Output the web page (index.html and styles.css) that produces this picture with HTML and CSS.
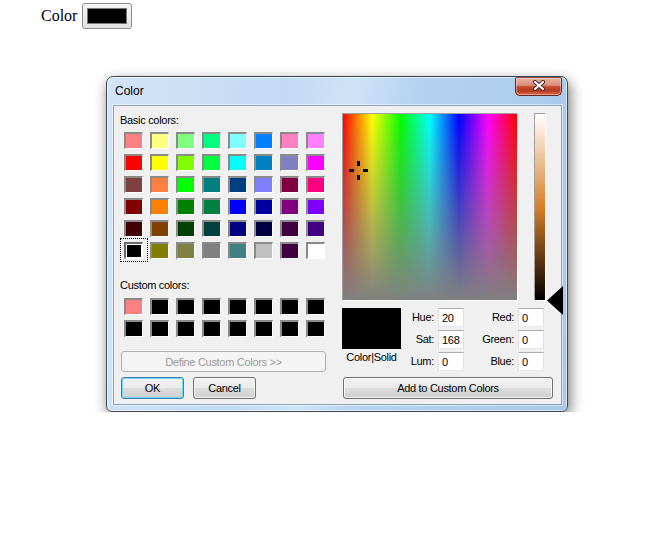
FILE: index.html
```html
<!DOCTYPE html>
<html lang="en">
<head>
    <meta charset="UTF-8">
    <title>Color</title>
    <link rel="stylesheet" href="styles.css">
</head>
<body>
    <div class="picker-row">
        <span>Color</span>
        <button class="color-btn"><span class="color-btn-swatch"></span></button>
    </div>

    <!-- Windows color dialog -->
    <div class="dialog">
        <div class="titlebar">
            <span class="title">Color</span>
            <div class="close-btn">
                <svg width="14" height="11" viewBox="0 0 14 11">
                    <path d="M3 2 L11 9 M11 2 L3 9" stroke="#4a2a24" stroke-width="4.2" stroke-linecap="round"/>
                    <path d="M3 2 L11 9 M11 2 L3 9" stroke="#fff" stroke-width="2.2" stroke-linecap="round"/>
                </svg>
            </div>
        </div>

        <div class="client">
            <div class="left-col">
                <div class="label">Basic colors:</div>
                <div class="swatch-grid">
                    <div class="cell"><div class="swatch" style="background:#ff8080"></div></div>
                    <div class="cell"><div class="swatch" style="background:#ffff80"></div></div>
                    <div class="cell"><div class="swatch" style="background:#80ff80"></div></div>
                    <div class="cell"><div class="swatch" style="background:#00ff80"></div></div>
                    <div class="cell"><div class="swatch" style="background:#80ffff"></div></div>
                    <div class="cell"><div class="swatch" style="background:#0080ff"></div></div>
                    <div class="cell"><div class="swatch" style="background:#ff80c0"></div></div>
                    <div class="cell"><div class="swatch" style="background:#ff80ff"></div></div>

                    <div class="cell"><div class="swatch" style="background:#ff0000"></div></div>
                    <div class="cell"><div class="swatch" style="background:#ffff00"></div></div>
                    <div class="cell"><div class="swatch" style="background:#80ff00"></div></div>
                    <div class="cell"><div class="swatch" style="background:#00ff40"></div></div>
                    <div class="cell"><div class="swatch" style="background:#00ffff"></div></div>
                    <div class="cell"><div class="swatch" style="background:#0080c0"></div></div>
                    <div class="cell"><div class="swatch" style="background:#8080c0"></div></div>
                    <div class="cell"><div class="swatch" style="background:#ff00ff"></div></div>

                    <div class="cell"><div class="swatch" style="background:#804040"></div></div>
                    <div class="cell"><div class="swatch" style="background:#ff8040"></div></div>
                    <div class="cell"><div class="swatch" style="background:#00ff00"></div></div>
                    <div class="cell"><div class="swatch" style="background:#008080"></div></div>
                    <div class="cell"><div class="swatch" style="background:#004080"></div></div>
                    <div class="cell"><div class="swatch" style="background:#8080ff"></div></div>
                    <div class="cell"><div class="swatch" style="background:#800040"></div></div>
                    <div class="cell"><div class="swatch" style="background:#ff0080"></div></div>

                    <div class="cell"><div class="swatch" style="background:#800000"></div></div>
                    <div class="cell"><div class="swatch" style="background:#ff8000"></div></div>
                    <div class="cell"><div class="swatch" style="background:#008000"></div></div>
                    <div class="cell"><div class="swatch" style="background:#008040"></div></div>
                    <div class="cell"><div class="swatch" style="background:#0000ff"></div></div>
                    <div class="cell"><div class="swatch" style="background:#0000a0"></div></div>
                    <div class="cell"><div class="swatch" style="background:#800080"></div></div>
                    <div class="cell"><div class="swatch" style="background:#8000ff"></div></div>

                    <div class="cell"><div class="swatch" style="background:#400000"></div></div>
                    <div class="cell"><div class="swatch" style="background:#804000"></div></div>
                    <div class="cell"><div class="swatch" style="background:#004000"></div></div>
                    <div class="cell"><div class="swatch" style="background:#004040"></div></div>
                    <div class="cell"><div class="swatch" style="background:#000080"></div></div>
                    <div class="cell"><div class="swatch" style="background:#000040"></div></div>
                    <div class="cell"><div class="swatch" style="background:#400040"></div></div>
                    <div class="cell"><div class="swatch" style="background:#400080"></div></div>

                    <div class="cell focused"><div class="swatch selected" style="background:#000000"></div></div>
                    <div class="cell"><div class="swatch" style="background:#808000"></div></div>
                    <div class="cell"><div class="swatch" style="background:#808040"></div></div>
                    <div class="cell"><div class="swatch" style="background:#808080"></div></div>
                    <div class="cell"><div class="swatch" style="background:#408080"></div></div>
                    <div class="cell"><div class="swatch" style="background:#c0c0c0"></div></div>
                    <div class="cell"><div class="swatch" style="background:#400040"></div></div>
                    <div class="cell"><div class="swatch" style="background:#ffffff"></div></div>
                </div>

                <div class="label custom-label">Custom colors:</div>
                <div class="swatch-grid custom-grid">
                    <div class="cell"><div class="swatch" style="background:#ff8080"></div></div>
                    <div class="cell"><div class="swatch"></div></div>
                    <div class="cell"><div class="swatch"></div></div>
                    <div class="cell"><div class="swatch"></div></div>
                    <div class="cell"><div class="swatch"></div></div>
                    <div class="cell"><div class="swatch"></div></div>
                    <div class="cell"><div class="swatch"></div></div>
                    <div class="cell"><div class="swatch"></div></div>
                    <div class="cell"><div class="swatch"></div></div>
                    <div class="cell"><div class="swatch"></div></div>
                    <div class="cell"><div class="swatch"></div></div>
                    <div class="cell"><div class="swatch"></div></div>
                    <div class="cell"><div class="swatch"></div></div>
                    <div class="cell"><div class="swatch"></div></div>
                    <div class="cell"><div class="swatch"></div></div>
                    <div class="cell"><div class="swatch"></div></div>
                </div>

                <button class="btn btn-define" disabled>Define Custom Colors &gt;&gt;</button>
                <div class="btn-row">
                    <button class="btn btn-default">OK</button>
                    <button class="btn">Cancel</button>
                </div>
            </div>

            <div class="right-col">
                <div class="spectrum-row">
                    <div class="spectrum">
                        <svg class="crosshair" width="19" height="19" viewBox="0 0 19 19">
                            <rect x="8" y="0" width="3" height="5"/>
                            <rect x="8" y="14" width="3" height="5"/>
                            <rect x="0" y="8" width="5" height="3"/>
                            <rect x="14" y="8" width="5" height="3"/>
                        </svg>
                    </div>
                    <div class="lum-wrap">
                        <div class="lum-bar"></div>
                        <svg class="lum-arrow" width="16" height="29" viewBox="0 0 16 29">
                            <polygon points="0,14.5 16,0 16,29"/>
                        </svg>
                    </div>
                </div>

                <div class="sample-row">
                    <div class="sample">
                        <div class="sample-box"></div>
                        <div class="sample-label">Color|Solid</div>
                    </div>
                    <div class="fields">
                        <label>Hue:</label><input type="text" value="20">
                        <label>Red:</label><input type="text" value="0">
                        <label>Sat:</label><input type="text" value="168">
                        <label>Green:</label><input type="text" value="0">
                        <label>Lum:</label><input type="text" value="0">
                        <label>Blue:</label><input type="text" value="0">
                    </div>
                </div>

                <button class="btn btn-add">Add to Custom Colors</button>
            </div>
        </div>
    </div>
</body>
</html>
```

FILE: styles.css
```css
* {
    box-sizing: border-box;
}

body {
    margin: 0;
    background: #fff;
    font-family: "Liberation Serif", "Times New Roman", serif;
}

.picker-row {
    display: flex;
    align-items: center;
    gap: 5px;
    padding: 3px 0 0 41px;
    font-size: 16px;
}

.color-btn {
    width: 50px;
    height: 26px;
    padding: 0;
    border: 1px solid #8e8f8f;
    border-radius: 3px;
    background: linear-gradient(#f6f6f6, #e2e2e2);
    display: flex;
    align-items: center;
    justify-content: center;
}

.color-btn-swatch {
    width: 40px;
    height: 16px;
    background: #000;
    border: 1px solid #777;
}

/* dialog frame */
.dialog {
    width: 462px;
    height: 336px;
    margin: 47px 0 0 106px;
    padding: 0 5px 6px 6px;
    display: flex;
    flex-direction: column;
    border: 1px solid #3b4756;
    border-radius: 7px 7px 6px 6px;
    background: linear-gradient(100deg, #d3e4f7 0%, #c3daf3 35%, #cfe3f7 48%, #b6d2f0 60%, #a8c8ea 100%);
    box-shadow: 2px 5px 14px rgba(0, 0, 0, 0.55), inset 0 0 0 1px rgba(255, 255, 255, 0.6);
    font-family: "Liberation Sans", Arial, sans-serif;
    font-size: 11px;
    letter-spacing: -0.3px;
    color: #000;
}

.titlebar {
    height: 28px;
    display: flex;
    align-items: flex-start;
    justify-content: space-between;
    padding-left: 2px;
}

.title {
    margin-top: 7px;
    font-size: 12px;
    line-height: 14px;
    letter-spacing: 0;
}

.close-btn {
    width: 47px;
    height: 19px;
    border: 1px solid #6b2a1d;
    border-top-color: #8a4a3c;
    border-radius: 2px 2px 5px 5px;
    background: linear-gradient(#eab0a2 0%, #dc8f7b 42%, #c64a30 52%, #b93a20 75%, #d5714f 100%);
    box-shadow: inset 0 0 0 1px rgba(255, 255, 255, 0.35);
    display: flex;
    align-items: center;
    justify-content: center;
    padding-bottom: 3px;
}

.client {
    flex: 1;
    display: flex;
    background: #f0f0f0;
    border: 1px solid #8ea3ba;
    box-shadow: 0 0 0 1px rgba(255, 255, 255, 0.5);
}

.left-col {
    width: 212px;
    padding: 7px 0 0 7px;
}

.label {
    line-height: 14px;
    margin-left: -1px;
}

.swatch-grid {
    margin-top: 2px;
    display: grid;
    grid-template-columns: repeat(8, 26px);
    grid-auto-rows: 22px;
}

.cell {
    padding: 3px 0 0 3px;
}

.cell.focused {
    outline: 1px dotted #000;
}

.swatch {
    width: 19px;
    height: 17px;
    background: #000;
    border-style: solid;
    border-width: 2px 1px 1px 2px;
    border-color: #8a8a8a #fff #fff #8a8a8a;
}

.swatch.selected {
    box-shadow: inset 0 0 0 1px #fff;
    border-color: #6a6a6a #fff #fff #6a6a6a;
}

.custom-label {
    margin-top: 17px;
}

.custom-grid {
    margin-top: 3px;
}

.btn {
    height: 22px;
    padding: 0;
    border: 1px solid #707070;
    border-radius: 3px;
    background: linear-gradient(#f2f2f2 0%, #ebebeb 48%, #dddddd 52%, #cfcfcf 100%);
    box-shadow: inset 0 0 0 1px rgba(255, 255, 255, 0.75);
    font: inherit;
    letter-spacing: inherit;
    color: #000;
}

.btn-define {
    display: block;
    width: 205px;
    height: 21px;
    margin-top: 12px;
    border-color: #adb2b5;
    background: #f4f4f4;
    box-shadow: none;
    color: #9c9c9c;
}

.btn-row {
    display: flex;
    gap: 9px;
    margin-top: 5px;
}

.btn-row .btn {
    width: 63px;
}

.btn-default {
    border-color: #3c7fb1;
    box-shadow: inset 0 0 0 1px #6fd6f6;
}

.right-col {
    width: 219px;
    margin-left: 16px;
    padding-top: 7px;
}

.spectrum-row {
    display: flex;
    gap: 16px;
}

.spectrum {
    position: relative;
    width: 176px;
    height: 188px;
    border: 1px solid;
    border-color: #a0a0a0 #fff #fff #a0a0a0;
    background:
        linear-gradient(rgba(128, 128, 128, 0), #808080),
        linear-gradient(to right, #f00, #ff0, #0f0, #0ff, #00f, #f0f, #f00);
}

.crosshair {
    position: absolute;
    left: 6px;
    top: 47px;
    fill: #000;
}

.lum-wrap {
    position: relative;
}

.lum-bar {
    width: 12px;
    height: 188px;
    border: 1px solid;
    border-color: #a0a0a0 #fff #fff #a0a0a0;
    background: linear-gradient(#fff, hsl(30, 70%, 50%), #000);
}

.lum-arrow {
    position: absolute;
    left: 13px;
    top: 173px;
    fill: #000;
}

.sample-row {
    display: flex;
    margin-top: 7px;
}

.sample {
    width: 59px;
}

.sample-box {
    height: 41px;
    background: #000;
}

.sample-label {
    margin-top: 1px;
    line-height: 14px;
    text-align: center;
}

.fields {
    display: grid;
    grid-template-columns: 37px 26px 54px 26px;
    grid-auto-rows: 19px;
    row-gap: 3px;
}

.fields label {
    text-align: right;
    padding-right: 4px;
    line-height: 19px;
}

.fields input {
    width: 26px;
    height: 19px;
    padding: 0 0 0 3px;
    border: 1px solid;
    border-color: #abadb3 #dbdfe6 #e3e9ef #e2e3ea;
    background: #fff;
    font: inherit;
    letter-spacing: inherit;
    color: #000;
}

.btn-add {
    display: block;
    width: 210px;
    margin: 6px 0 0 1px;
}
```
